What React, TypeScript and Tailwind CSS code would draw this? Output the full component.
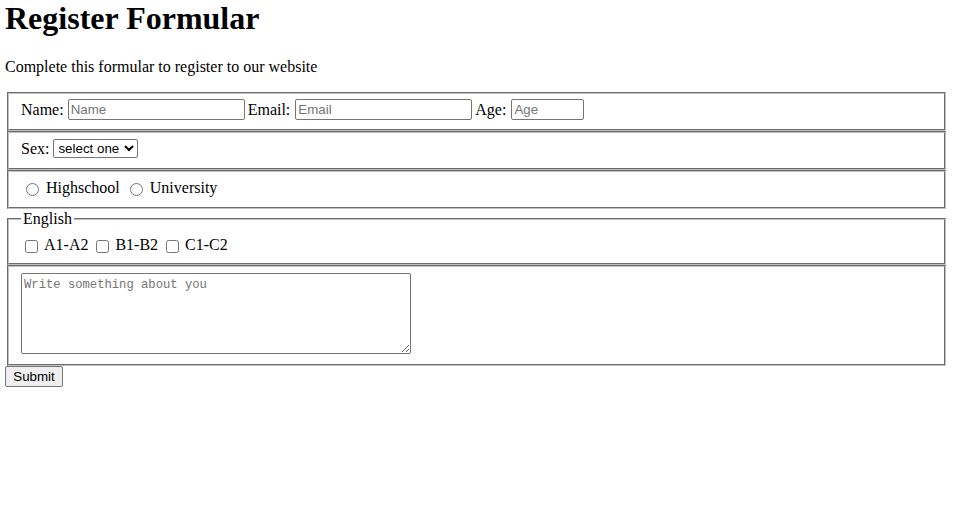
export default function App() {
  const field =
    "mx-[2px] border-2 [border-style:groove] border-[#c0c0c0] px-[12px] pt-[5px] pb-[9px]";
  const input =
    "h-[21px] rounded-[2px] border border-[#767676] bg-white px-[2px] font-['Liberation_Sans',Arial,sans-serif] text-[13.333px] text-black placeholder:text-[#757575] outline-none";
  const radio = "mt-[3px] mr-[3px] ml-[5px] h-[13px] w-[13px] shrink-0";
  const check = "mt-[3px] mr-[3px] ml-[4px] h-[13px] w-[13px] shrink-0";

  return (
    <div className="min-h-[529px] bg-white pl-[5px] pr-[8px] font-['Liberation_Serif','Times_New_Roman',serif] text-[16px] text-black">
      <h1 className="h-[37px] text-[32px] leading-[37px] font-bold">Register Formular</h1>
      <p className="mt-[21px] mb-[16px] h-[18px] leading-[18px]">
        Complete this formular to register to our website
      </p>

      <form onSubmit={(e) => e.preventDefault()}>
        {/* name, email, age */}
        <fieldset className={field}>
          <div className="flex h-[21px] items-center">
            <label htmlFor="name">Name:</label>
            <input id="name" type="text" placeholder="Name" className={`${input} ml-[4px] w-[177px]`} />
            <label htmlFor="email" className="ml-[3px]">Email:</label>
            <input id="email" type="text" placeholder="Email" className={`${input} ml-[5px] w-[177px]`} />
            <label htmlFor="age" className="ml-[3px]">Age:</label>
            <input id="age" type="text" placeholder="Age" className={`${input} ml-[5px] w-[73px]`} />
          </div>
        </fieldset>

        {/* sex */}
        <fieldset className={field}>
          <div className="flex h-[21px] items-center">
            <label htmlFor="sex">Sex:</label>
            <select
              id="sex"
              className="ml-[4px] h-[19px] w-[85px] rounded-[2px] border border-[#767676] bg-white font-['Liberation_Sans',Arial,sans-serif] text-[13.333px]"
            >
              <option>select one</option>
              <option>male</option>
              <option>female</option>
            </select>
          </div>
        </fieldset>

        {/* school */}
        <fieldset className={field}>
          <div className="flex h-[21px] items-center">
            <input id="hs" type="radio" name="school" className={radio} />
            <label htmlFor="hs" className="mr-[5px] ml-[4px]">Highschool</label>
            <input id="uni" type="radio" name="school" className={radio} />
            <label htmlFor="uni" className="ml-[4px]">University</label>
          </div>
        </fieldset>

        {/* english */}
        <fieldset className="mx-[2px] border-2 [border-style:groove] border-[#c0c0c0] px-[12px] pt-[5px] pb-[8px]">
          <legend className="px-[2px] leading-[20px]">English</legend>
          <div className="flex h-[21px] items-center">
            <input id="a" type="checkbox" className={check} />
            <label htmlFor="a" className="mr-[4px] ml-[3px]">A1-A2</label>
            <input id="b" type="checkbox" className={check} />
            <label htmlFor="b" className="mr-[4px] ml-[3px]">B1-B2</label>
            <input id="c" type="checkbox" className={check} />
            <label htmlFor="c" className="ml-[3px]">C1-C2</label>
          </div>
        </fieldset>

        {/* about */}
        <fieldset className={field}>
          <div className="h-[83px] pt-[1px]">
            <textarea
              placeholder="Write something about you"
              className="block h-[81px] w-[390px] resize rounded-[2px] border border-[#767676] bg-white px-[2px] pt-[3px] pb-[2px] font-['Liberation_Mono','Courier_New',monospace] text-[12.2px] leading-[17px] placeholder:text-[#757575] outline-none"
            />
          </div>
        </fieldset>

        <button
          type="submit"
          className="block h-[21px] w-[58px] rounded-[2px] border border-[#767676] bg-[#efefef] px-[6px] font-['Liberation_Sans',Arial,sans-serif] text-[13.333px] leading-[19px]"
        >
          Submit
        </button>
      </form>
    </div>
  );
}
